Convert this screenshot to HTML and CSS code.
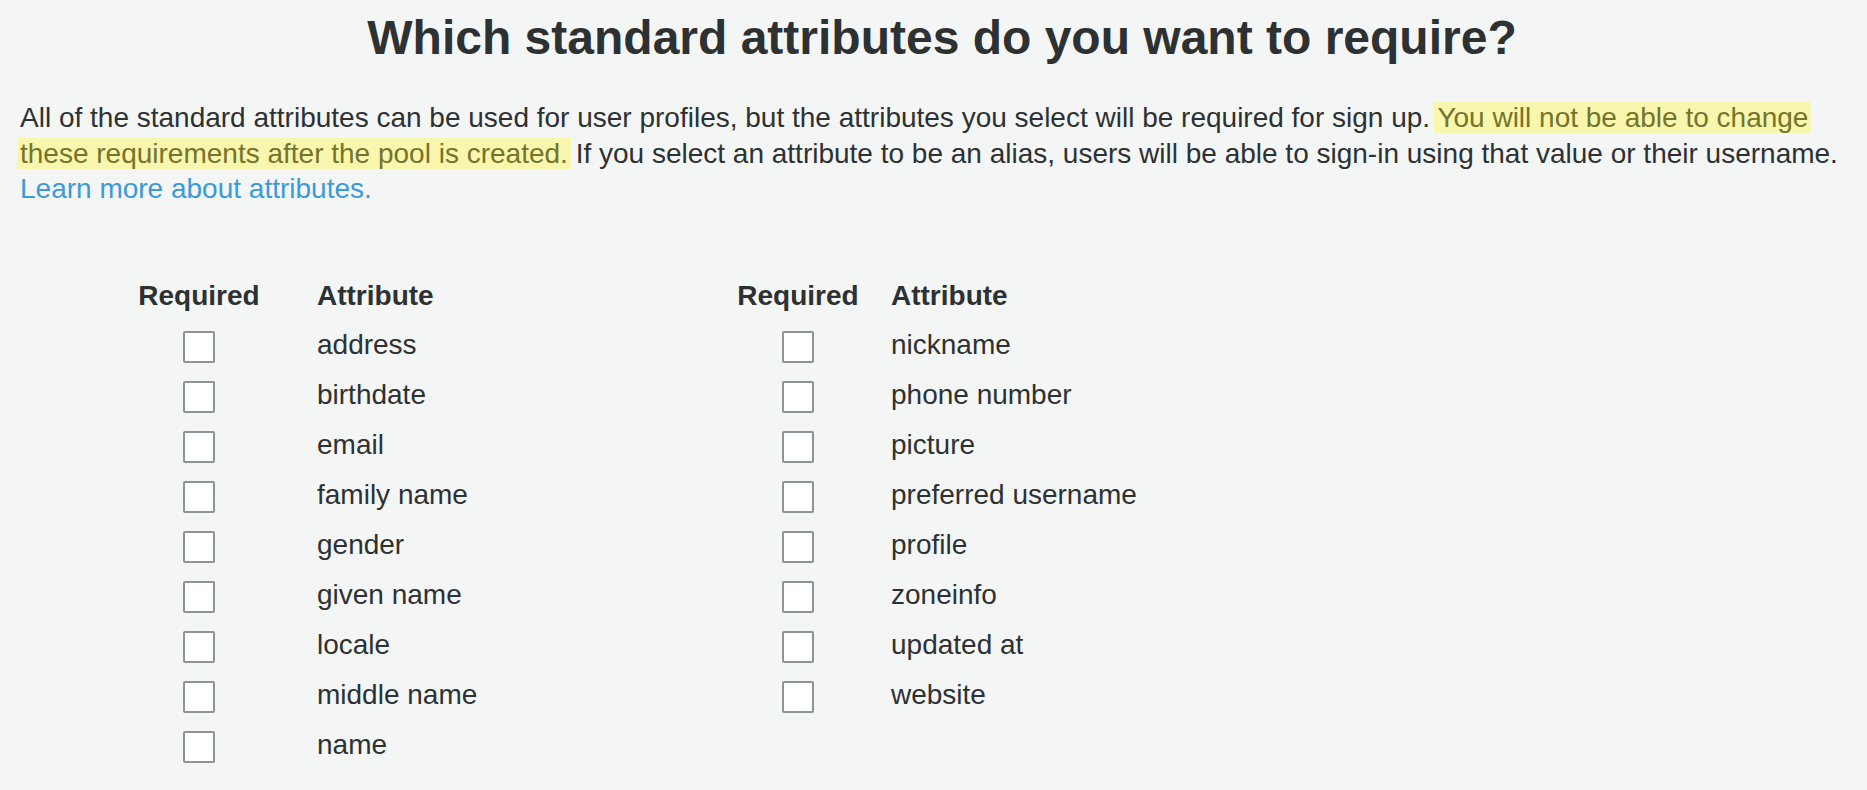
FILE: index.html
```html
<!DOCTYPE html>
<html lang="en">
<head>
<meta charset="utf-8">
<title>Standard attributes</title>
<link rel="stylesheet" href="styles.css">
</head>
<body>
<main class="page">
  <h1 class="title">Which standard attributes do you want to require?</h1>
  <p class="intro">All of the standard attributes can be used for user profiles, but the attributes you select will be required for sign up. <span class="warn">You will not be able to change these requirements after the pool is created.</span> If you select an attribute to be an alias, users will be able to sign-in using that value or their username. <a class="link" href="#">Learn more about attributes.</a></p>

  <div class="tables">
    <div class="attr-table left">
      <div class="th req">Required</div><div class="th">Attribute</div>
      <div class="cell req"><span class="box"></span></div><div class="cell name">address</div>
      <div class="cell req"><span class="box"></span></div><div class="cell name">birthdate</div>
      <div class="cell req"><span class="box"></span></div><div class="cell name">email</div>
      <div class="cell req"><span class="box"></span></div><div class="cell name">family name</div>
      <div class="cell req"><span class="box"></span></div><div class="cell name">gender</div>
      <div class="cell req"><span class="box"></span></div><div class="cell name">given name</div>
      <div class="cell req"><span class="box"></span></div><div class="cell name">locale</div>
      <div class="cell req"><span class="box"></span></div><div class="cell name">middle name</div>
      <div class="cell req"><span class="box"></span></div><div class="cell name">name</div>
    </div>
    <div class="attr-table right">
      <div class="th req">Required</div><div class="th">Attribute</div>
      <div class="cell req"><span class="box"></span></div><div class="cell name">nickname</div>
      <div class="cell req"><span class="box"></span></div><div class="cell name">phone number</div>
      <div class="cell req"><span class="box"></span></div><div class="cell name">picture</div>
      <div class="cell req"><span class="box"></span></div><div class="cell name">preferred username</div>
      <div class="cell req"><span class="box"></span></div><div class="cell name">profile</div>
      <div class="cell req"><span class="box"></span></div><div class="cell name">zoneinfo</div>
      <div class="cell req"><span class="box"></span></div><div class="cell name">updated at</div>
      <div class="cell req"><span class="box"></span></div><div class="cell name">website</div>
    </div>
  </div>
</main>
</body>
</html>
```

FILE: styles.css
```css
html, body {
  margin: 0;
  padding: 0;
  background: #f4f6f6;
}

body {
  font-family: "Liberation Sans", Arial, Helvetica, sans-serif;
  color: #2e3131;
  height: 790px;
  overflow: hidden;
}

.page {
  padding: 10px 1px 0 18px;
}

.title {
  margin: 0;
  font-size: 48px;
  line-height: 56px;
  font-weight: 700;
  text-align: center;
  color: #2e3131;
}

.intro {
  margin: 34px 0 0 0;
  font-size: 28px;
  line-height: 35.5px;
  padding-left: 2px;
}

.warn {
  background: #f8f7ad;
  color: #76742a;
  box-shadow: -3px 0 0 #f8f7ad, 3px 0 0 #f8f7ad;
  -webkit-box-decoration-break: clone;
  box-decoration-break: clone;
}

.link {
  color: #3d9ad8;
  text-decoration: none;
}

.tables {
  display: flex;
  margin-top: 65px;
  padding-left: 121px;
}

.attr-table {
  display: grid;
  grid-template-columns: 120px auto;
  grid-auto-rows: 50px;
  align-content: start;
  font-size: 28px;
}

.attr-table.left {
  width: 599px;
  column-gap: 58px;
}

.attr-table.right {
  column-gap: 33px;
}

.th {
  font-weight: 700;
  display: flex;
  align-items: center;
  white-space: nowrap;
  padding-bottom: 2px;
  box-sizing: border-box;
}

.th.req {
  justify-content: center;
}

.cell {
  display: flex;
  align-items: center;
  white-space: nowrap;
}

.cell.req {
  justify-content: center;
}

.cell.name {
  padding-bottom: 3px;
  box-sizing: border-box;
}

.box {
  width: 32px;
  height: 32px;
  box-sizing: border-box;
  background: #ffffff;
  border: 2.5px solid #8c9496;
  border-radius: 2px;
}
```
